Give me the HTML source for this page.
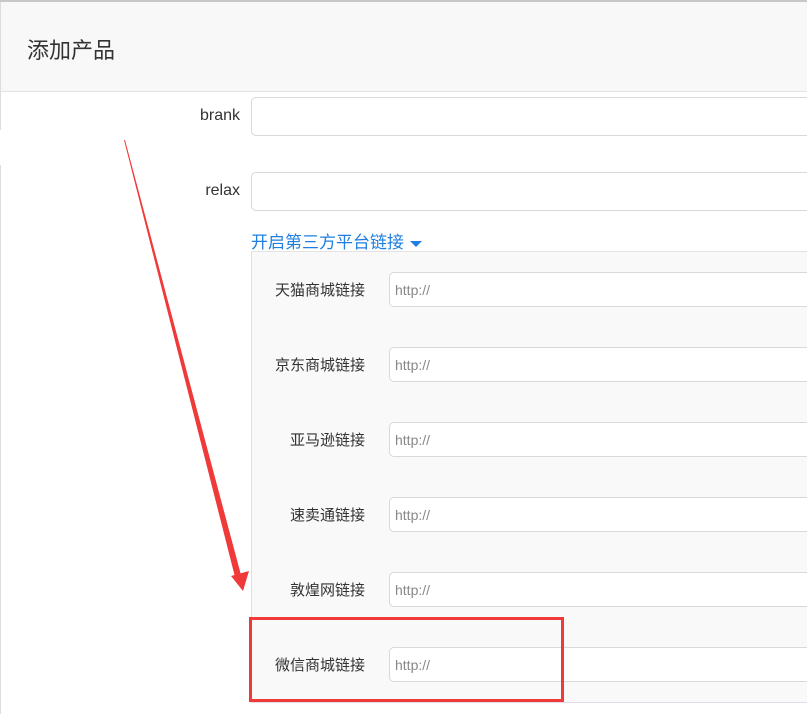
<!DOCTYPE html>
<html><head><meta charset="utf-8"><style>
*{box-sizing:border-box;margin:0;padding:0}
body{width:807px;height:714px;overflow:hidden;background:#fff;position:relative;font-family:"Liberation Sans","Noto Sans CJK SC",sans-serif;color:#333}
.top{position:absolute;left:0;top:0;width:807px;height:2px;background:#c8c8c8}
.hdr{position:absolute;left:0;top:2px;width:807px;height:90px;background:#f8f8f8;border-bottom:1px solid #e3e3e3;border-left:1px solid #ddd}
.hdr span{position:absolute;left:26px;top:31px;font-size:22px;color:#333}
.lb{position:absolute;left:0;width:1px;background:#ddd}
.lab{position:absolute;font-size:16px;color:#333;text-align:right}
.inp{position:absolute;background:#fff;border:1px solid #d9d9d9;border-radius:5px}
.link{position:absolute;left:251px;top:228px;font-size:17px;color:#1f7fe0}
.caret{display:inline-block;width:0;height:0;border-left:6px solid transparent;border-right:6px solid transparent;border-top:6px solid #1f7fe0;margin-left:6px;vertical-align:middle}
.panel{position:absolute;left:251px;top:251px;width:560px;height:452px;background:#f9f9f9;border-left:1px solid #dde;border-top:1px solid #e3e3e3;border-bottom:1px solid #dde}
.sl{position:absolute;width:115px;left:250px;text-align:right;font-size:15px;color:#333}
.si{position:absolute;left:389px;width:430px;height:35px;background:#fff;border:1px solid #d9d9d9;border-radius:5px;font-size:14px;color:#888;padding:9px 5px}
.red{position:absolute;left:249px;top:617px;width:315px;height:85px;border:3px solid #f03a3a}
</style></head><body>
<div class="top"></div>
<div class="hdr"><span>添加产品</span></div>
<div class="lb" style="top:92px;height:38px"></div>
<div class="lb" style="top:165px;height:549px"></div>
<div class="lab" style="left:150px;width:90px;top:107px">brank</div>
<div class="inp" style="left:251px;top:97px;width:570px;height:39px"></div>
<div class="lab" style="left:150px;width:90px;top:182px">relax</div>
<div class="inp" style="left:251px;top:172px;width:570px;height:39px"></div>
<div class="link">开启第三方平台链接<span class="caret"></span></div>
<div class="panel"></div>
<div class="sl" style="top:279px">天猫商城链接</div><div class="si" style="top:272px">http://</div>
<div class="sl" style="top:354px">京东商城链接</div><div class="si" style="top:347px">http://</div>
<div class="sl" style="top:429px">亚马逊链接</div><div class="si" style="top:422px">http://</div>
<div class="sl" style="top:504px">速卖通链接</div><div class="si" style="top:497px">http://</div>
<div class="sl" style="top:579px">敦煌网链接</div><div class="si" style="top:572px">http://</div>
<div class="sl" style="top:654px">微信商城链接</div><div class="si" style="top:647px">http://</div>
<div class="red"></div>
<svg style="position:absolute;left:0;top:0" width="807" height="714">
<polygon points="124,140 125,140 241,575 235,577" fill="#f03a3a"/>
<polygon points="231,576 249,571 243,591" fill="#f03a3a"/>
</svg>
</body></html>
